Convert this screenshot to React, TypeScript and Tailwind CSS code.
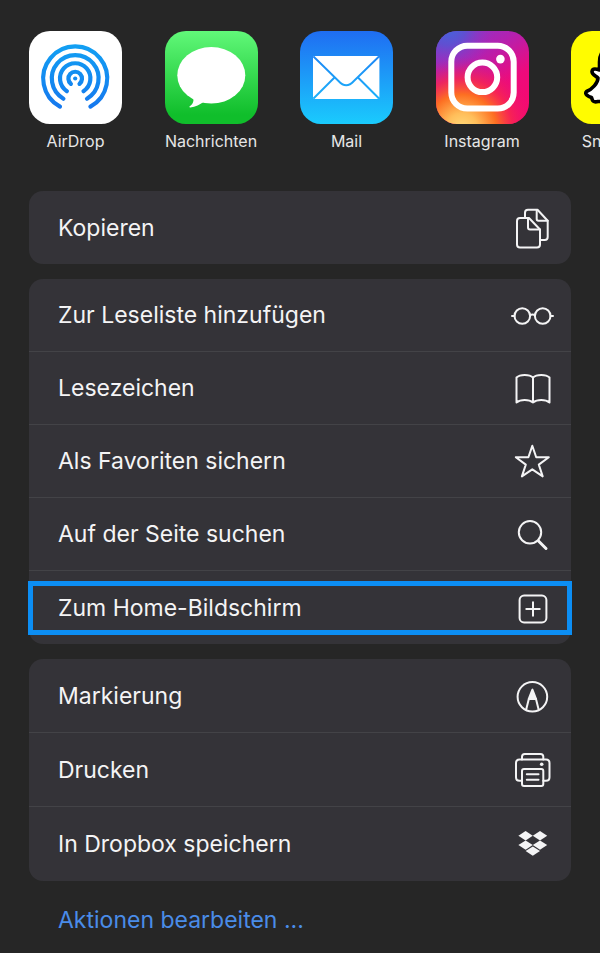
import React from "react";

type Action = {
  label: string;
  icon: React.ReactNode;
  highlighted?: boolean;
};

function AirDropIcon() {
  return (
    <svg viewBox="0 0 93 93" className="size-full" aria-hidden="true">
      <defs>
        <linearGradient id="airdrop" gradientUnits="userSpaceOnUse" x1="0" y1="14" x2="0" y2="78">
          <stop offset="0" stopColor="#12a0f3" />
          <stop offset="1" stopColor="#1577ee" />
        </linearGradient>
      </defs>
      <rect width="93" height="93" fill="#fff" />
      <g fill="none" stroke="url(#airdrop)" strokeWidth="4.2" strokeLinecap="round">
        <path d="M31 75.6A32 32 0 1 1 61.4 75.6" />
        <path d="M34.4 67.7A23.4 23.4 0 1 1 58 67.7" />
        <path d="M37.9 60.2A15.2 15.2 0 1 1 54.5 60.2" />
        <path d="M41.9 52.8A6.8 6.8 0 1 1 50.5 52.8" />
      </g>
      <circle cx="46.2" cy="47.5" r="2.1" fill="#148bf0" />
    </svg>
  );
}

function MessagesIcon() {
  return (
    <svg viewBox="0 0 93 93" className="size-full" aria-hidden="true">
      <defs>
        <linearGradient id="messages" x1="0" y1="0" x2="0" y2="1">
          <stop offset="0" stopColor="#61f879" />
          <stop offset="0.9" stopColor="#10be2b" />
        </linearGradient>
      </defs>
      <rect width="93" height="93" fill="url(#messages)" />
      <ellipse cx="46.3" cy="44.3" rx="34" ry="28.3" fill="#fff" />
      <path d="M27 65C30 69 28 73 24.5 75.6C24 76.3 24.6 76.6 25.4 76.5C30.5 76 35 73.5 38.6 71Z" fill="#fff" />
    </svg>
  );
}

function MailIcon() {
  return (
    <svg viewBox="0 0 93 93" className="size-full" aria-hidden="true">
      <defs>
        <linearGradient id="mail" gradientUnits="userSpaceOnUse" x1="0" y1="0" x2="0" y2="93">
          <stop offset="0" stopColor="#1f6df2" />
          <stop offset="1" stopColor="#1acbfd" />
        </linearGradient>
      </defs>
      <rect width="93" height="93" fill="url(#mail)" />
      <rect x="13" y="25" width="66.4" height="43" rx="2" fill="#fff" />
      <g fill="none" stroke="url(#mail)" strokeWidth="1.9">
        <path d="M13.5 25.5L38.5 50Q46.2 58.5 53.9 50L79 25.5" />
        <path d="M34.5 46.5L13.5 67.5" />
        <path d="M58 46.5L79 67.5" />
      </g>
    </svg>
  );
}

function InstagramIcon() {
  return (
    <svg viewBox="0 0 93 93" className="size-full" aria-hidden="true">
      <defs>
        <linearGradient id="ig-base" x1="0.2" y1="0" x2="0.8" y2="1">
          <stop offset="0" stopColor="#8a36c8" />
          <stop offset="0.3" stopColor="#b321b0" />
          <stop offset="0.65" stopColor="#ee0a7c" />
          <stop offset="1" stopColor="#f70a6c" />
        </linearGradient>
        <radialGradient id="ig-warm" gradientUnits="userSpaceOnUse" cx="26" cy="98" r="72">
          <stop offset="0" stopColor="#ffdc7c" />
          <stop offset="0.22" stopColor="#ffbe5a" />
          <stop offset="0.48" stopColor="#fd6f22" />
          <stop offset="0.7" stopColor="#f8284e" stopOpacity="0.8" />
          <stop offset="1" stopColor="#e5127a" stopOpacity="0" />
        </radialGradient>
        <radialGradient id="ig-cool" gradientUnits="userSpaceOnUse" cx="12" cy="-4" r="46">
          <stop offset="0" stopColor="#4166df" />
          <stop offset="0.4" stopColor="#5854d3" stopOpacity="0.85" />
          <stop offset="1" stopColor="#9a2fc4" stopOpacity="0" />
        </radialGradient>
      </defs>
      <rect width="93" height="93" fill="url(#ig-base)" />
      <rect width="93" height="93" fill="url(#ig-warm)" />
      <rect width="93" height="93" fill="url(#ig-cool)" />
      <g fill="none" stroke="#fff" strokeWidth="6">
        <rect x="15.3" y="14.8" width="62.4" height="62.8" rx="16" />
        <circle cx="46.4" cy="46.3" r="14.8" />
      </g>
      <circle cx="64.4" cy="28.1" r="4.3" fill="#fff" />
    </svg>
  );
}

function SnapchatIcon() {
  return (
    <svg viewBox="0 0 93 93" className="size-full" aria-hidden="true">
      <rect width="93" height="93" fill="#fffc00" />
      <path
        d="M46.5 14C35 14 28.5 21 28.5 31V39C25.5 38 21.5 37 21 40.5C20.8 43.5 25 45 27 47C27 52 21 58.5 15.5 60.5C13 63 17.5 65.5 20.5 66.5C21.5 69 21 72 27 70.5C34 69.5 37 77 46.5 77C56 77 59 69.5 66 70.5C72 72 71.5 69 72.5 66.5C75.5 65.5 80 63 77.5 60.5C72 58.5 66 52 66 47C68 45 72.2 43.5 72 40.5C71.5 37 67.5 38 64.5 39V31C64.5 21 58 14 46.5 14Z"
        fill="#fff"
        stroke="#000"
        strokeWidth="3.6"
        strokeLinejoin="round"
      />
    </svg>
  );
}

function Glyph({ children }: { children: React.ReactNode }) {
  return (
    <svg
      viewBox="0 0 44 44"
      className="size-11 shrink-0"
      fill="none"
      stroke="currentColor"
      strokeWidth="2"
      strokeLinecap="round"
      strokeLinejoin="round"
      aria-hidden="true"
    >
      {children}
    </svg>
  );
}

const apps = [
  { name: "AirDrop", icon: <AirDropIcon /> },
  { name: "Nachrichten", icon: <MessagesIcon /> },
  { name: "Mail", icon: <MailIcon /> },
  { name: "Instagram", icon: <InstagramIcon /> },
  { name: "Snapchat", icon: <SnapchatIcon /> },
];

const copyActions: Action[] = [
  {
    label: "Kopieren",
    icon: (
      <Glyph>
        <path d="M18 12H9Q6 12 6 15V38.5Q6 41.5 9 41.5H26Q29 41.5 29 38.5V23.5L18 12Z" />
        <path d="M17 12V21.5Q17 23.5 19 23.5H29" />
        <path d="M14 12V6.8Q14 3.8 17 3.8H26.5L36.7 14.8V31Q36.7 34 33.7 34H29" />
        <path d="M25.7 4V13Q25.7 14.8 27.5 14.8H36.7" />
      </Glyph>
    ),
  },
];

const pageActions: Action[] = [
  {
    label: "Zur Leseliste hinzufügen",
    icon: (
      <Glyph>
        <circle cx="11.3" cy="23" r="7.8" />
        <circle cx="31.7" cy="23" r="7.8" />
        <path d="M19 22Q21.5 20.8 24 22M1 23H3.5M39.5 23H42" />
      </Glyph>
    ),
  },
  {
    label: "Lesezeichen",
    icon: (
      <Glyph>
        <path d="M22 36.5V11.5C18.5 8 9 8 5.5 11.5V36.5C9.5 33 18 33 22 36.5C26 33 34.5 33 38.5 36.5V11.5C35 8 25.5 8 22 11.5" />
      </Glyph>
    ),
  },
  {
    label: "Als Favoriten sichern",
    icon: (
      <Glyph>
        <path d="M21.3 6.8L25.2 18.2H37.8L27.8 25.6L31.7 37.4L21.3 30.3L10.9 37.4L14.8 25.6L4.8 18.2H17.4Z" />
      </Glyph>
    ),
  },
  {
    label: "Auf der Seite suchen",
    icon: (
      <Glyph>
        <circle cx="19" cy="20.3" r="11.2" />
        <path d="M27.5 29L35 36.5" strokeWidth="3" />
      </Glyph>
    ),
  },
  {
    label: "Zum Home-Bildschirm",
    highlighted: true,
    icon: (
      <Glyph>
        <rect x="8.6" y="9.6" width="26.8" height="26.8" rx="4.5" />
        <path d="M22 16.3V29.7M15.3 23H28.7" />
      </Glyph>
    ),
  },
];

const documentActions: Action[] = [
  {
    label: "Markierung",
    icon: (
      <Glyph>
        <circle cx="21.4" cy="22.8" r="14.8" />
        <path d="M21.4 15.6L17.8 24.9H25Z" fill="currentColor" />
        <path d="M17.8 24.9L15.2 35.6M25 24.9L27.6 35.6" />
      </Glyph>
    ),
  },
  {
    label: "Drucken",
    icon: (
      <Glyph>
        <path d="M11 32.8H8.5Q5 32.8 5 29.3V15Q5 11.5 8.5 11.5H35Q38.5 11.5 38.5 15V29.3Q38.5 32.8 35 32.8H32.3" />
        <path d="M11 11.5V8.7Q11 5.9 13.8 5.9H29.5Q32.3 5.9 32.3 8.7V11.5" />
        <rect x="11" y="21" width="21.3" height="17" rx="2" />
        <path d="M15.8 26.3H27.5M15.8 31.7H27.5" />
        <circle cx="30.7" cy="16.2" r="1.8" fill="currentColor" stroke="none" />
      </Glyph>
    ),
  },
  {
    label: "In Dropbox speichern",
    icon: (
      <Glyph>
        <g fill="currentColor" stroke="none">
          <path d="M14.6 9L21.8 13.7L14.6 18.4L7.4 13.7Z" />
          <path d="M29 9L36.2 13.7L29 18.4L21.8 13.7Z" />
          <path d="M14.6 18.4L21.8 23.1L14.6 27.8L7.4 23.1Z" />
          <path d="M29 18.4L36.2 23.1L29 27.8L21.8 23.1Z" />
          <path d="M21.8 24.4L29 29.1L21.8 33.8L14.6 29.1Z" />
        </g>
      </Glyph>
    ),
  },
];

function ActionGroup({ actions, rowClass = "h-[73px]" }: { actions: Action[]; rowClass?: string }) {
  return (
    <ul className="divide-y divide-[#434347] rounded-[14px] bg-[#343338]">
      {actions.map((action) => (
        <li key={action.label} className={`relative ${rowClass}`}>
          <button
            type="button"
            className="flex size-full items-center justify-between pr-4 pl-[29px] text-left text-[23px] leading-8 text-[#f4f4f5]"
          >
            <span>{action.label}</span>
            {action.icon}
          </button>
          {action.highlighted && (
            <span className="pointer-events-none absolute -inset-x-px top-[10px] bottom-[9px] border-5 border-[#0c8ef4]" />
          )}
        </li>
      ))}
    </ul>
  );
}

export default function App() {
  return (
    <main className="min-h-screen overflow-hidden bg-[#262626] pt-[31px] font-['Inter',sans-serif]">
      <div className="overflow-hidden pl-[29px]">
        <div className="flex w-[635px] justify-between">
          {apps.map((app) => (
            <button
              key={app.name}
              type="button"
              className="flex w-[93px] flex-col items-center gap-[5px] text-base text-[#e6e6e6]"
            >
              <span className="size-[93px] overflow-hidden rounded-[21px]">{app.icon}</span>
              <span>{app.name}</span>
            </button>
          ))}
        </div>
      </div>

      <div className="mx-[29px] mt-[38px] flex flex-col gap-[15px]">
        <ActionGroup actions={copyActions} />
        <ActionGroup actions={pageActions} />
        <ActionGroup actions={documentActions} rowClass="h-[74px]" />
      </div>

      <a href="#aktionen" className="ml-[58px] mt-[23px] inline-block text-[23px] leading-8 text-[#4a8ce8]">
        Aktionen bearbeiten ...
      </a>
    </main>
  );
}
